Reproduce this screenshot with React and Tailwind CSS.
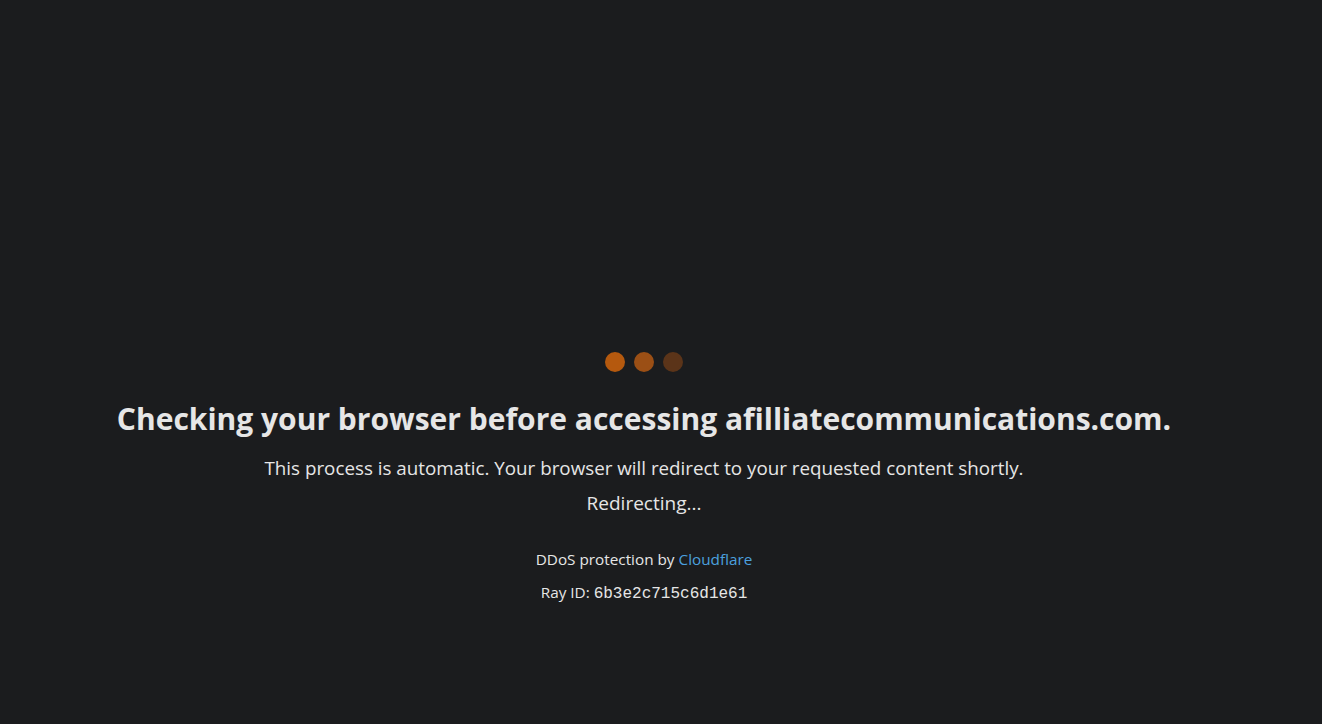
export default function App() {
  return (
    <div className="min-h-screen w-full bg-[#1b1c1e] text-[#e6e6e6] flex flex-col items-center text-center pr-[34px] font-['Open_Sans',sans-serif]">
      <div className="h-[352px]" />
      <div className="flex gap-[9px]">
        <span className="w-[20px] h-[20px] rounded-full bg-[#b5590e]" />
        <span className="w-[20px] h-[20px] rounded-full bg-[#9b4f15]" />
        <span className="w-[20px] h-[20px] rounded-full bg-[#5b3419]" />
      </div>
      <h1 className="mt-[27px] text-[30px] leading-[40px] font-bold">
        Checking your browser before accessing afilliatecommunications.com.
      </h1>
      <p className="mt-[16px] text-[18.8px] leading-[26px]">
        This process is automatic. Your browser will redirect to your requested content shortly.
      </p>
      <p className="mt-[9px] text-[19px] leading-[26px]">Redirecting...</p>
      <p className="mt-[33px] text-[15.3px] leading-[20px]">
        DDoS protection by <a className="text-[#4ba0df]">Cloudflare</a>
      </p>
      <p className="mt-[13px] text-[15.3px] leading-[20px]">
        Ray ID: <code className="font-['Liberation_Mono',monospace] text-[16px]">6b3e2c715c6d1e61</code>
      </p>
    </div>
  );
}
